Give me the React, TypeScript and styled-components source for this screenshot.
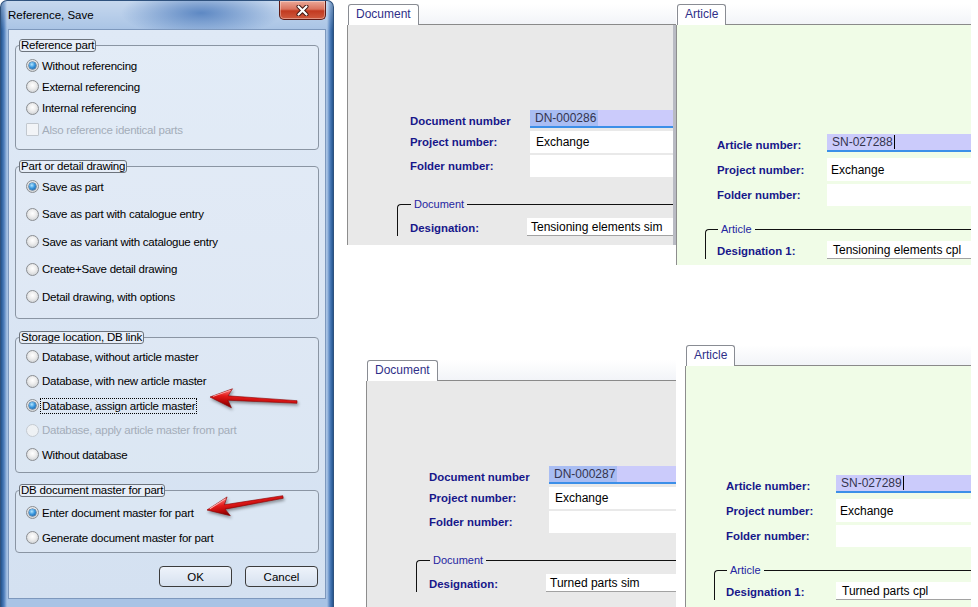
import React from 'react';
import styled, { createGlobalStyle, css } from 'styled-components';

const GlobalStyle = createGlobalStyle`
  html, body {
    margin: 0;
    padding: 0;
    background: #fff;
  }
  body {
    font-family: "Liberation Sans", Arial, sans-serif;
  }
  * {
    box-sizing: border-box;
  }
`;

const Canvas = styled.div`
  position: relative;
  width: 978px;
  height: 607px;
  overflow: hidden;
  background: #fff;
`;

/* ---------- dialog ---------- */

const Window = styled.div`
  width: 334px;
  height: 607px;
  display: flex;
  flex-direction: column;
  padding: 0 7px 8px;
  border: 1px solid #2f527e;
  border-bottom: none;
  border-radius: 7px 7px 0 0;
  background:
    radial-gradient(ellipse 80px 24px at 200px 12px, rgba(62, 112, 182, 0.75), rgba(62, 112, 182, 0)),
    linear-gradient(180deg, rgba(255, 255, 255, 0.35) 0, rgba(255, 255, 255, 0) 30px),
    linear-gradient(90deg, #24558f 0, #4f7fbd 3px, #a8c3e5 6px, #a8c3e5 calc(100% - 6px), #4f7fbd calc(100% - 3px), #24558f 100%);
`;

const TitleBar = styled.div`
  height: 28px;
  flex: none;
  display: flex;
  justify-content: space-between;
  align-items: flex-start;
`;

const Title = styled.span`
  font-size: 11.5px;
  color: #000;
  line-height: 28px;
`;

const CloseButton = styled.div`
  width: 47px;
  height: 19px;
  display: flex;
  align-items: center;
  justify-content: center;
  border: 1px solid #5e1a14;
  border-top: none;
  border-radius: 0 0 5px 5px;
  background: linear-gradient(180deg, #eba898 0, #d9735e 45%, #c23a20 55%, #cf5a3e 100%);
  box-shadow: inset 0 0 0 1px rgba(255, 255, 255, 0.35);
`;

const Client = styled.div`
  flex: 1;
  display: flex;
  flex-direction: column;
  padding: 9px 6px 0;
  border: 1px solid #7d98bd;
  background: linear-gradient(180deg, #dfe9f6 0, #d4e1f1 100%);
`;

interface IGroup {
  $mt: number;
  $pt: number;
  $pb: number;
}

const Group = styled.fieldset<IGroup>`
  margin: ${p => p.$mt}px 0 0;
  padding: ${p => p.$pt}px 0 ${p => p.$pb}px;
  min-width: 0;
  border: 1px solid #8a95a3;
  border-radius: 4px;
  background: rgba(255, 255, 255, 0.14);
`;

const Legend = styled.legend`
  margin-left: 3px;
  padding: 0 1px;
  height: 13px;
  line-height: 11px;
  border: 1px solid #6d747d;
  border-radius: 3px;
  background: #e7eef8;
  font-size: 11.5px;
  letter-spacing: -0.2px;
  color: #000;
`;

interface IOption {
  $h: number;
  $disabled?: boolean;
}

const OptionRow = styled.div<IOption>`
  height: ${p => p.$h}px;
  display: flex;
  align-items: center;
  gap: 3px;
  padding-left: 10px;
  font-size: 11.5px;
  letter-spacing: -0.25px;
  white-space: nowrap;
  color: ${p => (p.$disabled ? '#a4adb9' : '#000')};
`;

interface IMark {
  $checked?: boolean;
  $disabled?: boolean;
}

const Radio = styled.span<IMark>`
  position: relative;
  flex: none;
  width: 13px;
  height: 13px;
  border-radius: 50%;
  border: 1px solid ${p => (p.$disabled ? '#c4cad1' : '#8b8e92')};
  background: ${p =>
    p.$disabled
      ? '#eef1f4'
      : 'radial-gradient(circle at 50% 40%, #ffffff 0, #eeeeee 40%, #c4c8cc 100%)'};
  ${p =>
    p.$checked &&
    css`
      &::after {
        content: '';
        position: absolute;
        left: 2px;
        top: 2px;
        width: 7px;
        height: 7px;
        border-radius: 50%;
        background: radial-gradient(circle at 40% 35%, #b4e6ff 0, #3c9ae0 45%, #0e4c90 100%);
        box-shadow: 0 0 0 0.5px #1b4a7a;
      }
    `}
`;

const CheckBox = styled.span<IMark>`
  flex: none;
  width: 13px;
  height: 13px;
  border: 1px solid ${p => (p.$disabled ? '#c2c8cf' : '#8b8e92')};
  border-radius: 1px;
  background: ${p => (p.$disabled ? '#f2f4f7' : '#fff')};
`;

const FocusText = styled.span`
  margin-left: -1px;
  padding: 0 1px;
  line-height: 14px;
  outline: 1px dotted #000;
`;

const ButtonRow = styled.div`
  display: flex;
  justify-content: flex-end;
  gap: 13px;
  margin-top: 13px;
  padding-right: 1px;
`;

const DialogButton = styled.button`
  width: 73px;
  height: 21px;
  padding: 0;
  border: 1px solid #3c3c3c;
  border-radius: 4px;
  background: linear-gradient(180deg, #eef3fa 0, #e2eaf5 50%, #d6e1ef 100%);
  font-family: "Liberation Sans", Arial, sans-serif;
  font-size: 11.5px;
  color: #000;
`;

/* ---------- form panels ---------- */

interface IFrame {
  $x: number;
  $y: number;
  $w: number;
  $h: number;
}

const PanelFrame = styled.div<IFrame>`
  position: absolute;
  left: ${p => p.$x}px;
  top: ${p => p.$y}px;
  width: ${p => p.$w}px;
  height: ${p => p.$h}px;
  display: flex;
  flex-direction: column;
  overflow: hidden;
`;

const TabStrip = styled.div`
  flex: none;
  height: 21px;
  display: flex;
`;

const Tab = styled.div`
  margin-left: 1px;
  padding: 0 7px;
  height: 21px;
  border: 1px solid #898c93;
  border-bottom: none;
  border-radius: 3px 3px 0 0;
  background: #fff;
  font-size: 12px;
  line-height: 19px;
  color: #2f2f88;
`;

const StripFill = styled.div`
  flex: 1;
  border-bottom: 1px solid #8a8a8a;
  background: linear-gradient(180deg, #ffffff 0, #f2f4f8 100%);
`;

interface IBody {
  $tone: 'doc' | 'article';
  $edge?: boolean;
  $pl: number;
  $pt: number;
}

const Body = styled.div<IBody>`
  flex: 1;
  padding: ${p => p.$pt}px 0 0 ${p => p.$pl}px;
  border-left: 1px solid #8d8d8d;
  background: ${p => (p.$tone === 'doc' ? '#e9e9e9' : '#f0fce7')};
  ${p =>
    p.$edge &&
    css`
      border-right: 3px solid #b9bbc3;
    `}
`;

const Form = styled.div<{ $ml: number }>`
  margin-left: ${p => p.$ml}px;
`;

interface IFieldRow {
  $mt: number;
  $h: number;
  $label: number;
}

const FieldRow = styled.div<IFieldRow>`
  display: grid;
  grid-template-columns: ${p => p.$label}px 1fr;
  align-items: center;
  height: ${p => p.$h}px;
  margin-top: ${p => p.$mt}px;
`;

const FieldLabel = styled.span<{ $drop?: number }>`
  padding-top: ${p => p.$drop || 0}px;
  font-size: 11.4px;
  font-weight: bold;
  color: #17178a;
  white-space: nowrap;
`;

interface IFieldBox {
  $kind: 'active' | 'plain' | 'line';
  $pl: number;
}

const FieldBox = styled.div<IFieldBox>`
  height: 100%;
  display: flex;
  align-items: center;
  padding-left: ${p => p.$pl}px;
  font-size: 12px;
  color: #000;
  white-space: nowrap;
  overflow: hidden;
  background: #fff;
  ${p =>
    p.$kind === 'active' &&
    css`
      background: #cbcbfb;
      border-bottom: 2px solid #3c8fe8;
      color: #34344e;
    `}
  ${p =>
    p.$kind === 'line' &&
    css`
      border-bottom: 1px solid #a2a2a2;
    `}
`;

const Selection = styled.span`
  height: 100%;
  display: flex;
  align-items: center;
  padding: 0 2px 0 5px;
  background: #a9bdf3;
`;

const Caret = styled.span`
  display: inline-block;
  width: 1px;
  height: 14px;
  margin-left: 1px;
  background: #000;
`;

interface ISubGroup {
  $mt: number;
  $pt: number;
  $pl: number;
}

const SubGroup = styled.fieldset<ISubGroup>`
  margin: ${p => p.$mt}px 0 0;
  padding: ${p => p.$pt}px 0 0 ${p => p.$pl}px;
  min-width: 0;
  border: none;
  border-top: 1px solid #111;
  border-left: 1px solid #111;
  border-radius: 4px 0 0 0;
`;

const SubLegend = styled.legend`
  margin-left: 1px;
  padding: 0 3px;
  line-height: 12px;
  font-size: 11px;
  color: #2424a0;
`;

const ArrowLayer = styled.svg`
  position: absolute;
  left: 0;
  top: 0;
  pointer-events: none;
  filter: drop-shadow(1px 2px 1.5px rgba(0, 0, 0, 0.4));
`;

/* ---------- data ---------- */

type TOption = {
  label: string;
  checked?: boolean;
  disabled?: boolean;
  checkbox?: boolean;
  focused?: boolean;
};

type TGroup = {
  title: string;
  mt: number;
  pt: number;
  pb: number;
  row: number;
  items: TOption[];
};

const groups: TGroup[] = [
  {
    title: 'Reference part',
    mt: 0,
    pt: 3,
    pb: 9,
    row: 21.3,
    items: [
      { label: 'Without referencing', checked: true },
      { label: 'External referencing' },
      { label: 'Internal referencing' },
      { label: 'Also reference identical parts', checkbox: true, disabled: true },
    ],
  },
  {
    title: 'Part or detail drawing',
    mt: 10,
    pt: 0,
    pb: 7,
    row: 27.5,
    items: [
      { label: 'Save as part', checked: true },
      { label: 'Save as part with catalogue entry' },
      { label: 'Save as variant with catalogue entry' },
      { label: 'Create+Save detail drawing' },
      { label: 'Detail drawing, with options' },
    ],
  },
  {
    title: 'Storage location, DB link',
    mt: 12,
    pt: 1,
    pb: 5,
    row: 24.5,
    items: [
      { label: 'Database, without article master' },
      { label: 'Database, with new article master' },
      { label: 'Database, assign article master', checked: true, focused: true },
      { label: 'Database, apply article master from part', disabled: true },
      { label: 'Without database' },
    ],
  },
  {
    title: 'DB document master for part',
    mt: 11,
    pt: 3,
    pb: 2,
    row: 25,
    items: [
      { label: 'Enter document master for part', checked: true },
      { label: 'Generate document master for part' },
    ],
  },
];

type TLayout = {
  tab: string;
  numberLabel: string;
  groupTitle: string;
  desigLabel: string;
  bodyPl: number;
  bodyPt: number;
  formMl: number;
  labelW: number;
  rows: { mt: number; h: number; pl: number; drop: number }[];
  groupMt: number;
  groupPt: number;
  groupPl: number;
  desigW: number;
  desigPl: number;
};

const layouts: Record<'doc' | 'article', TLayout> = {
  doc: {
    tab: 'Document',
    numberLabel: 'Document number',
    groupTitle: 'Document',
    desigLabel: 'Designation:',
    bodyPl: 49,
    bodyPt: 85,
    formMl: 13,
    labelW: 120,
    rows: [
      { mt: 0, h: 18, pl: 0, drop: 4 },
      { mt: 3, h: 22, pl: 6, drop: 0 },
      { mt: 2, h: 22, pl: 6, drop: 0 },
    ],
    groupMt: 21,
    groupPt: 8,
    groupPl: 12,
    desigW: 117,
    desigPl: 4,
  },
  article: {
    tab: 'Article',
    numberLabel: 'Article number:',
    groupTitle: 'Article',
    desigLabel: 'Designation 1:',
    bodyPl: 28,
    bodyPt: 109,
    formMl: 12,
    labelW: 110,
    rows: [
      { mt: 0, h: 18, pl: 5, drop: 4 },
      { mt: 6, h: 23, pl: 4, drop: 0 },
      { mt: 3, h: 22, pl: 4, drop: 0 },
    ],
    groupMt: 17,
    groupPt: 6,
    groupPl: 11,
    desigW: 110,
    desigPl: 6,
  },
};

type TPanel = {
  kind: 'doc' | 'article';
  x: number;
  y: number;
  w: number;
  h: number;
  edge?: boolean;
  number: string;
  designation: string;
};

const panels: TPanel[] = [
  { kind: 'doc', x: 347, y: 4, w: 329, h: 241, edge: true, number: 'DN-000286', designation: 'Tensioning elements sim' },
  { kind: 'article', x: 676, y: 4, w: 295, h: 261, number: 'SN-027288', designation: 'Tensioning elements cpl' },
  { kind: 'doc', x: 366, y: 360, w: 310, h: 247, number: 'DN-000287', designation: 'Turned parts sim' },
  { kind: 'article', x: 685, y: 345, w: 286, h: 262, number: 'SN-027289', designation: 'Turned parts cpl' },
];

/* ---------- components ---------- */

function CloseGlyph() {
  return (
    <svg width="13" height="11" viewBox="0 0 13 11">
      <path d="M2.5 1.5 L10.5 9.5 M10.5 1.5 L2.5 9.5" stroke="#3d1410" strokeWidth="4" strokeLinecap="round" />
      <path d="M2.5 1.5 L10.5 9.5 M10.5 1.5 L2.5 9.5" stroke="#fff" strokeWidth="2.2" strokeLinecap="round" />
    </svg>
  );
}

function Dialog() {
  return (
    <Window>
      <TitleBar>
        <Title>Reference, Save</Title>
        <CloseButton>
          <CloseGlyph />
        </CloseButton>
      </TitleBar>
      <Client>
        {groups.map(g => (
          <Group key={g.title} $mt={g.mt} $pt={g.pt} $pb={g.pb}>
            <Legend>{g.title}</Legend>
            {g.items.map(item => (
              <OptionRow key={item.label} $h={g.row} $disabled={item.disabled}>
                {item.checkbox ? (
                  <CheckBox $disabled={item.disabled} />
                ) : (
                  <Radio $checked={item.checked} $disabled={item.disabled} />
                )}
                {item.focused ? <FocusText>{item.label}</FocusText> : <span>{item.label}</span>}
              </OptionRow>
            ))}
          </Group>
        ))}
        <ButtonRow>
          <DialogButton>OK</DialogButton>
          <DialogButton>Cancel</DialogButton>
        </ButtonRow>
      </Client>
    </Window>
  );
}

function FormPanel({ panel }: { panel: TPanel }) {
  const l = layouts[panel.kind];
  const isDoc = panel.kind === 'doc';
  const labels = [l.numberLabel, 'Project number:', 'Folder number:'];

  return (
    <PanelFrame $x={panel.x} $y={panel.y} $w={panel.w} $h={panel.h}>
      <TabStrip>
        <Tab>{l.tab}</Tab>
        <StripFill />
      </TabStrip>
      <Body $tone={panel.kind} $edge={panel.edge} $pl={l.bodyPl} $pt={l.bodyPt}>
        <Form $ml={l.formMl}>
          {l.rows.map((r, i) => (
            <FieldRow key={labels[i]} $mt={r.mt} $h={r.h} $label={l.labelW}>
              <FieldLabel $drop={r.drop}>{labels[i]}</FieldLabel>
              {i === 0 ? (
                <FieldBox $kind="active" $pl={r.pl}>
                  {isDoc ? (
                    <Selection>{panel.number}</Selection>
                  ) : (
                    <>
                      {panel.number}
                      <Caret />
                    </>
                  )}
                </FieldBox>
              ) : (
                <FieldBox $kind="plain" $pl={r.pl}>
                  {i === 1 ? 'Exchange' : ''}
                </FieldBox>
              )}
            </FieldRow>
          ))}
        </Form>
        <SubGroup $mt={l.groupMt} $pt={l.groupPt} $pl={l.groupPl}>
          <SubLegend>{l.groupTitle}</SubLegend>
          <FieldRow $mt={0} $h={18} $label={l.desigW}>
            <FieldLabel $drop={2}>{l.desigLabel}</FieldLabel>
            <FieldBox $kind="line" $pl={l.desigPl}>
              {panel.designation}
            </FieldBox>
          </FieldRow>
        </SubGroup>
      </Body>
    </PanelFrame>
  );
}

function RedArrow({ tip, tail }: { tip: [number, number]; tail: [number, number] }) {
  const dx = tail[0] - tip[0];
  const dy = tail[1] - tip[1];
  const len = Math.sqrt(dx * dx + dy * dy);
  const angle = (Math.atan2(dy, dx) * 180) / Math.PI;
  const points = `0,0 22,-9.5 18,-2.2 ${len},-1.3 ${len},1.3 18,2.2 22,9.5`;

  return (
    <g transform={`translate(${tip[0]} ${tip[1]}) rotate(${angle})`}>
      <polygon points={points} fill="url(#arrowFill)" stroke="#8c0000" strokeWidth="0.6" strokeLinejoin="round" />
      <polyline points="3,-0.8 20,-7.8" stroke="#ffb0b0" strokeWidth="1" fill="none" />
    </g>
  );
}

export default function App() {
  return (
    <>
      <GlobalStyle />
      <Canvas>
        <Dialog />
        {panels.map(p => (
          <FormPanel key={p.number} panel={p} />
        ))}
        <ArrowLayer width="978" height="607" viewBox="0 0 978 607">
          <defs>
            <linearGradient id="arrowFill" gradientUnits="userSpaceOnUse" x1="0" y1="-9" x2="0" y2="9">
              <stop offset="0" stopColor="#ff7a7a" />
              <stop offset="0.4" stopColor="#e21a1a" />
              <stop offset="0.7" stopColor="#b80808" />
              <stop offset="1" stopColor="#7a0000" />
            </linearGradient>
          </defs>
          <RedArrow tip={[210, 397]} tail={[297, 402]} />
          <RedArrow tip={[207, 510]} tail={[283, 497]} />
        </ArrowLayer>
      </Canvas>
    </>
  );
}
